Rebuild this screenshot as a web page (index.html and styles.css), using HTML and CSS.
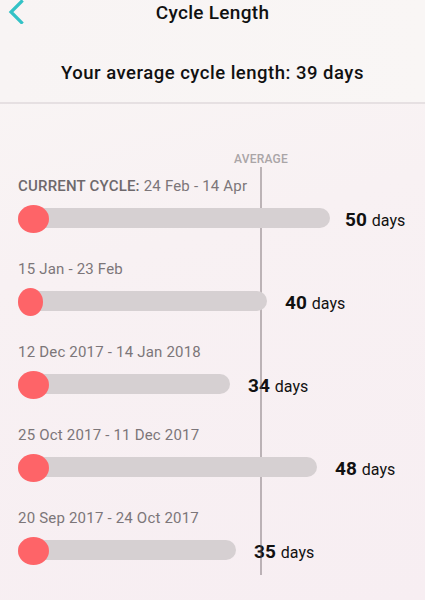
FILE: index.html
```html
<!DOCTYPE html>
<html>
<head>
<meta charset="utf-8">
<link rel="stylesheet" href="styles.css">
</head>
<body>
<div class="screen">
  <header class="header">
    <div class="nav">
      <svg class="back" width="16" height="24" viewBox="0 0 16 24"><polyline points="13.5,1.5 3,12 13.5,22.5" fill="none" stroke="#33c2c6" stroke-width="3.2" stroke-linecap="square"/></svg>
      <h1 class="title">Cycle Length</h1>
    </div>
    <p class="summary">Your average cycle length: 39 days</p>
  </header>
  <section class="chart">
    <div class="avg-marker">
      <span class="avg-label">AVERAGE</span>
      <span class="avg-line"></span>
    </div>
    <div class="row">
      <div class="label"><span class="current">CURRENT CYCLE:</span> 24 Feb - 14 Apr</div>
      <div class="bar-row">
        <div class="track" style="width:312px"><span class="period" style="width:31px"></span></div>
        <div class="value first"><b>50</b> days</div>
      </div>
    </div>
    <div class="row">
      <div class="label">15 Jan - 23 Feb</div>
      <div class="bar-row">
        <div class="track" style="width:249px"><span class="period" style="width:25px"></span></div>
        <div class="value"><b>40</b> days</div>
      </div>
    </div>
    <div class="row">
      <div class="label">12 Dec 2017 - 14 Jan 2018</div>
      <div class="bar-row">
        <div class="track" style="width:212px"><span class="period" style="width:31px"></span></div>
        <div class="value"><b>34</b> days</div>
      </div>
    </div>
    <div class="row">
      <div class="label">25 Oct 2017 - 11 Dec 2017</div>
      <div class="bar-row">
        <div class="track" style="width:299px"><span class="period" style="width:31px"></span></div>
        <div class="value"><b>48</b> days</div>
      </div>
    </div>
    <div class="row">
      <div class="label">20 Sep 2017 - 24 Oct 2017</div>
      <div class="bar-row">
        <div class="track" style="width:218px"><span class="period" style="width:31px"></span></div>
        <div class="value"><b>35</b> days</div>
      </div>
    </div>
  </section>
</div>
</body>
</html>
```

FILE: styles.css
```css
* { box-sizing: border-box; }
html, body { margin: 0; padding: 0; }
body {
  width: 425px;
  height: 600px;
  overflow: hidden;
  font-family: Roboto, "Liberation Sans", Arial, sans-serif;
  background: linear-gradient(165deg, #f9f6f5 0%, #f8f1f3 40%, #f7eef2 100%);
  color: #111;
}
.screen { width: 425px; height: 600px; display: flex; flex-direction: column; }
.header {
  height: 104px;
  border-bottom: 2px solid #e6e0e2;
  background: linear-gradient(90deg, #f8f4f4, #f9f6f5);
}
.nav {
  position: relative;
  height: 26px;
  display: flex;
  align-items: center;
  justify-content: center;
}
.back { position: absolute; left: 8px; top: 0; }
.title {
  margin: 0;
  font-size: 19px;
  font-weight: 500;
  line-height: 26px;
  letter-spacing: 0.3px;
}
.summary {
  margin: 35px 0 0;
  text-align: center;
  font-size: 18.5px;
  font-weight: 500;
  line-height: 24px;
  letter-spacing: 0.5px;
}
.chart {
  position: relative;
  flex: 1;
  padding: 72px 0 0 18px;
  display: flex;
  flex-direction: column;
  gap: 27px;
}
.avg-marker {
  position: absolute;
  left: 261px;
  top: 48px;
  width: 0;
  display: flex;
  flex-direction: column;
  align-items: center;
}
.avg-label {
  font-size: 12px;
  line-height: 14px;
  font-weight: 500;
  color: #aaa5a7;
  white-space: nowrap;
  letter-spacing: 0.2px;
}
.avg-line {
  margin-top: 1px;
  width: 1.5px;
  height: 408px;
  background: rgba(90, 80, 85, 0.38);
}
.row { display: flex; flex-direction: column; gap: 8px; }
.label {
  font-size: 15px;
  line-height: 20px;
  color: #7c7679;
  letter-spacing: 0.2px;
}
.current { font-weight: 500; color: #6e696c; }
.bar-row {
  height: 28px;
  display: flex;
  align-items: center;
  gap: 18px;
}
.track {
  position: relative;
  height: 20px;
  border-radius: 10px;
  background: #d6d0d2;
  flex: none;
}
.period {
  position: absolute;
  left: 0;
  top: -3px;
  height: 28px;
  border-radius: 50%;
  background: #fe6468;
}
.value {
  font-size: 16px;
  color: #111;
  white-space: nowrap;
  padding-top: 2px;
}
.value.first { margin-left: -3px; }
.value b { font-size: 19px; font-weight: 700; margin-right: 1px; }
```
